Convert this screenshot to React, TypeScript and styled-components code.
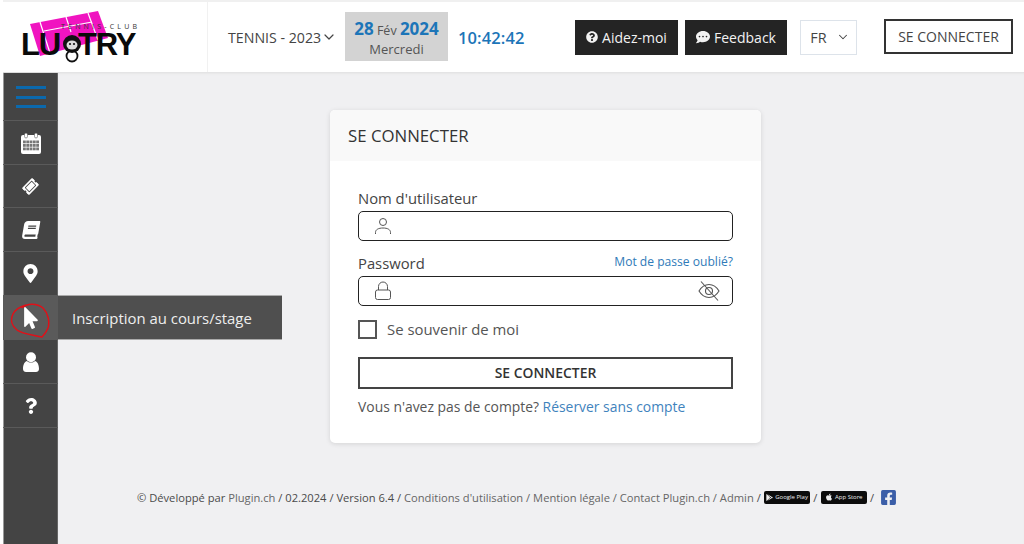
import React from "react";
import styled, { createGlobalStyle } from "styled-components";
import { FaTicketAlt, FaBook, FaMapMarkerAlt, FaMousePointer, FaQuestion, FaQuestionCircle, FaCommentDots, FaFacebookSquare, FaApple, FaGooglePlay } from "react-icons/fa";
import { ChevronDown } from "lucide-react";

const Global = createGlobalStyle`
  html, body { margin: 0; padding: 0; height: 100%; overflow: hidden; background: #fff; }
  body { font-family: "Open Sans", "Liberation Sans", sans-serif; }
  #root { height: 544px; }
  * { box-sizing: border-box; }
`;
const Page = styled.div`
  width: 1024px; height: 544px; display: flex; flex-direction: column;
  padding: 2px 0 0 3px; background: #fff; position: relative;
`;
const TopEdge = styled.div`position: absolute; left: 3px; right: 0; top: 0; height: 2px; background: #f0f0f0;`;
const Header = styled.header`
  height: 70px; display: flex; align-items: center; background: #fff; flex: none;
`;
const LogoCell = styled.div`
  width: 205px; height: 100%; border-right: 1px solid #f1f1f1; display: flex; align-items: center; padding-left: 13px; flex: none;
`;
const Season = styled.div`
  display: flex; align-items: center; margin-left: 20px; width: 117px; font-size: 14.2px; color: #444; flex: none; white-space: nowrap;
`;
const DateBox = styled.div`
  width: 103px; height: 49px; background: #d3d3d3; flex: none; display: flex; flex-direction: column; align-items: center; padding-top: 5px; margin-top: -1px;
`;
const DateLine = styled.div`
  font-size: 12.5px; color: #555; line-height: 24px; white-space: nowrap;
`;
const DateStrong = styled.b`font-size: 17px; font-weight: 700; color: #1c75b8;`;
const Weekday = styled.div`font-size: 13px; color: #555; line-height: 15px; margin-top: -1px;`;
const Time = styled.div`
  margin-left: 10px; width: 117px; flex: none; font-size: 16.5px; font-weight: 600; color: #1c75b8; letter-spacing: .1px;
`;
const DarkButton = styled.div<{ $w: number }>`
  width: ${p => p.$w}px; height: 35px; margin-right: 7px; flex: none; background: #242424; color: #f2f2f2; font-size: 14px; font-weight: 500;
  display: flex; align-items: center; justify-content: center; gap: 4px; svg { flex: none; }
`;
const Lang = styled.div`
  width: 57px; height: 35px; margin-left: 6px; flex: none; border: 1px solid #dde3ea; font-size: 14.4px; color: #444;
  display: flex; align-items: center; justify-content: center; gap: 9px; padding-left: 3px;
`;
const HeaderLogin = styled.div`
  width: 129px; height: 35px; margin-left: 27px; flex: none; border: 2px solid #333; color: #444; font-size: 14px;
  display: flex; align-items: center; justify-content: center; white-space: nowrap; margin-top: -1px;
`;
const Body = styled.div`flex: 1; display: flex; min-height: 0;`;
const Sidebar = styled.nav`
  width: 55px; flex: none; background: #444; border-top: 1px solid #ddd; position: relative;
  box-shadow: 1px 0 0 #999 inset, -1px 0 0 #666 inset;
`;
const Burger = styled.div`
  height: 48px; display: flex; flex-direction: column; gap: 6.500px; align-items: center; padding-top: 13px; border-bottom: 1px solid #5a5a5a;
  span { display: block; width: 30px; height: 3px; background: #0b69ad; flex: none; }
`;
const NavItem = styled.div<{ $active?: boolean; $h?: number; $pt?: number }>`
  height: ${p => p.$h ?? 44}px; display: flex; align-items: center; justify-content: center; color: #fff; position: relative;
  padding-top: ${p => p.$pt ?? 0}px;
  background: ${p => (p.$active ? "#5a5a5a" : "transparent")};
  border-bottom: 1px solid #5a5a5a;
`;
const TiltedTicket = styled(FaTicketAlt)`transform: rotate(-45deg);`;
const SlantedBook = styled(FaBook)`transform: skewX(-10deg);`;
const Tip = styled.div`
  position: absolute; left: 100%; top: -1px; width: 224px; height: 45px; background: #4f4f4f; color: #eee; font-size: 14.9px;
  display: flex; align-items: center; padding-left: 14px; white-space: nowrap; border-top: 1px solid #aaa; border-bottom: 1px solid #aaa;
`;
const RedRing = styled.svg`position: absolute; left: 7px; top: 6px;`;
const Main = styled.main`
  flex: 1; background: #f0f0f2; padding: 38px 0 0 272px; box-shadow: inset 0 3px 3px -2px #ddd; display: flex; flex-direction: column;
`;
const Card = styled.section`
  width: 431px; height: 333px; flex: none; background: #fff; border-radius: 5px; box-shadow: 0 1px 5px rgba(0,0,0,.12); overflow: hidden;
`;
const CardHead = styled.div`
  height: 51px; background: #f9f9f9; display: flex; align-items: center; padding-left: 18px; font-size: 16.8px; color: #333;
`;
const CardBody = styled.div`padding: 27px 28px 0; display: flex; flex-direction: column;`;
const LabelRow = styled.div<{ $mt?: number }>`
  display: flex; justify-content: space-between; align-items: flex-start; height: 23px; font-size: 14.8px; color: #444; line-height: 20px; margin-top: ${p => p.$mt ?? 0}px; white-space: nowrap;
`;
const Forgot = styled.a`font-size: 12.1px; color: #2f7ab8; line-height: 18px;`;
const Field = styled.div`
  height: 30px; border: 1px solid #222; border-radius: 5px; display: flex; align-items: center; justify-content: space-between; padding: 0 12px 0 14.500px; flex: none;
`;
const Remember = styled.label`
  display: flex; align-items: center; gap: 10px; font-size: 14.9px; color: #555; margin-top: 14px; height: 19px; white-space: nowrap;
`;
const RememberText = styled.span`margin-top: -2px;`;
const Check = styled.span`width: 19px; height: 19px; border: 2px solid #555; background: #fff; flex: none;`;
const Submit = styled.div`
  height: 32px; border: 2px solid #444; margin-top: 18px; padding-bottom: 2px; display: flex; align-items: center; justify-content: center; font-size: 13.9px; font-weight: 600; color: #333; flex: none;
`;
const Hint = styled.div`margin-top: 8px; font-size: 13.9px; color: #555; white-space: nowrap; line-height: 20px;`;
const Link = styled.a`color: #3f83bd;`;
const Footer = styled.footer`
  margin: 45px 0 0 -193px; width: 780px; display: flex; align-items: center; gap: 3.3px; font-size: 11.16px; color: #4a4a4a; white-space: nowrap; height: 18px;
`;
const FootLink = styled.a`color: #666;`;
const Badge = styled.span`
  width: 46px; height: 13px; background: #0c0c0c; border-radius: 2px; color: #eee; font-size: 6px; display: inline-flex; align-items: center; justify-content: center; gap: 2px; line-height: 1; flex: none;
`;
const FacebookIcon = styled(FaFacebookSquare)`color: #3b5ea8; margin-left: 3px; flex: none;`;

const Logo = () => (
  <svg width="130" height="60" viewBox="0 0 130 60">
    <polygon points="14,17 82,4 92,31 24,49" fill="#f014c0" />
    <g stroke="#fff" strokeWidth="1.200" fill="none">
      <line x1="24" y1="15" x2="34" y2="46" />
      <line x1="72" y1="6" x2="82" y2="33" />
      <line x1="28" y1="24" x2="76" y2="15" />
      <line x1="50" y1="10" x2="55" y2="25" />
    </g>
    <text x="45" y="22" fontSize="7" textLength="76" fontFamily="Open Sans, sans-serif" fill="#333">TENNIS-CLUB</text>
    <text x="5" y="48" fontSize="31" fontWeight="700" letterSpacing="-1.200" fontFamily="Liberation Sans, sans-serif" fill="#0a0a0a">LU<tspan dx="18">TRY</tspan></text>
    <circle cx="56" cy="49" r="5.500" fill="none" stroke="#111" strokeWidth="1.800" />
    <circle cx="56" cy="37" r="9" fill="#111" />
    <ellipse cx="56" cy="38" rx="5.500" ry="4.500" fill="#ddd" />
    <circle cx="54" cy="37" r="1.100" fill="#111" /><circle cx="58" cy="37" r="1.100" fill="#111" />
  </svg>
);
const CalendarIcon = () => (
  <svg width="20" height="21" viewBox="0 0 20 21">
    <rect x="0" y="2" width="20" height="19" rx="2" fill="#fff" />
    <rect x="3.500" y="0" width="3" height="5" rx="1.500" fill="#fff" stroke="#444" strokeWidth=".5" />
    <rect x="13.500" y="0" width="3" height="5" rx="1.500" fill="#fff" stroke="#444" strokeWidth=".5" />
    {[7.500, 11, 14.500].map(y => [2, 5.300, 8.600, 11.900, 15.200].map(x => (
      <rect key={`${x}-${y}`} x={x} y={y} width="2.800" height="2.800" fill="#777" />
    )))}
  </svg>
);
const BustIcon = () => (
  <svg width="16" height="20" viewBox="0 0 16 20" fill="#fff">
    <circle cx="8" cy="5.200" r="5" />
    <path d="M0 17c0-5 2-7.500 4-8 1 1 2.500 1.500 4 1.500s3-.5 4-1.500c2 .5 4 3 4 8 0 2-1.500 3-3 3H3c-1.500 0-3-1-3-3z" />
  </svg>
);
const UserLine = () => (
  <svg width="18" height="20" viewBox="0 0 18 20" fill="none" stroke="#555" strokeWidth="1">
    <circle cx="9" cy="6" r="3.500" /><path d="M1.500 18v-1.500c0-3 3-4.500 7.500-4.500s7.500 1.500 7.500 4.500V18" />
  </svg>
);
const LockLine = () => (
  <svg width="18" height="20" viewBox="0 0 18 20" fill="none" stroke="#555" strokeWidth="1">
    <rect x="1.500" y="9" width="15" height="9.500" rx="2" /><path d="M4.500 9V5.500a4.500 4.500 0 0 1 9 0V9" />
  </svg>
);
const EyeOffLine = () => (
  <svg width="22" height="20" viewBox="0 0 22 20" fill="none" stroke="#555" strokeWidth="1.100">
    <path d="M1 10c3-5 6.500-6.500 10-6.500S18 5 21 10c-3 5-6.500 6.500-10 6.500S4 15 1 10z" /><circle cx="11" cy="10" r="3.500" /><line x1="3" y1="0.500" x2="20" y2="19.500" />
  </svg>
);

export default function App() {
  return (
    <Page>
      <Global />
      <TopEdge />
      <Header>
        <LogoCell><Logo /></LogoCell>
        <Season>TENNIS - 2023<ChevronDown size={16} strokeWidth={1.800} /></Season>
        <DateBox>
          <DateLine><DateStrong>28</DateStrong> Fév <DateStrong>2024</DateStrong></DateLine>
          <Weekday>Mercredi</Weekday>
        </DateBox>
        <Time>10:42:42</Time>
        <DarkButton $w={103}><FaQuestionCircle size={12} />Aidez-moi</DarkButton>
        <DarkButton $w={102}><FaCommentDots size={14} />Feedback</DarkButton>
        <Lang>FR<ChevronDown size={14} strokeWidth={1.800} /></Lang>
        <HeaderLogin>SE CONNECTER</HeaderLogin>
      </Header>
      <Body>
        <Sidebar>
          <Burger><span /><span /><span /></Burger>
          <NavItem $pt={2}><CalendarIcon /></NavItem>
          <NavItem $h={43}><TiltedTicket size={15} /></NavItem>
          <NavItem><SlantedBook size={18} /></NavItem>
          <NavItem><FaMapMarkerAlt size={19} /></NavItem>
          <NavItem $active>
            <FaMousePointer size={22} />
            <RedRing width="42" height="38" viewBox="0 0 42 38" fill="none" stroke="#e01018" strokeWidth="1.500">
              <path d="M12 6C17 1 27 1 33 6c5 5 7 14 5 20-2 5-4 7-6 9-8-2-20-3-25-7C2 24 0 18 3 12c2-4 6-7 13-9" />
            </RedRing>
            <Tip>Inscription au cours/stage</Tip>
          </NavItem>
          <NavItem><BustIcon /></NavItem>
          <NavItem><FaQuestion size={16} /></NavItem>
        </Sidebar>
        <Main>
          <Card>
            <CardHead>SE CONNECTER</CardHead>
            <CardBody>
              <LabelRow>Nom d'utilisateur</LabelRow>
              <Field><UserLine /></Field>
              <LabelRow $mt={12}>Password<Forgot>Mot de passe oublié?</Forgot></LabelRow>
              <Field><LockLine /><EyeOffLine /></Field>
              <Remember><Check /><RememberText>Se souvenir de moi</RememberText></Remember>
              <Submit>SE CONNECTER</Submit>
              <Hint>Vous n'avez pas de compte? <Link>Réserver sans compte</Link></Hint>
            </CardBody>
          </Card>
          <Footer>
            <span>© Développé par <FootLink>Plugin.ch</FootLink> / 02.2024 / Version 6.4 / <FootLink>Conditions d'utilisation / Mention légale / Contact Plugin.ch / Admin</FootLink> /</span>
            <Badge><FaGooglePlay size={7} />Google Play</Badge> /
            <Badge><FaApple size={8} />App Store</Badge> /
            <FacebookIcon size={17} />
          </Footer>
        </Main>
      </Body>
    </Page>
  );
}
